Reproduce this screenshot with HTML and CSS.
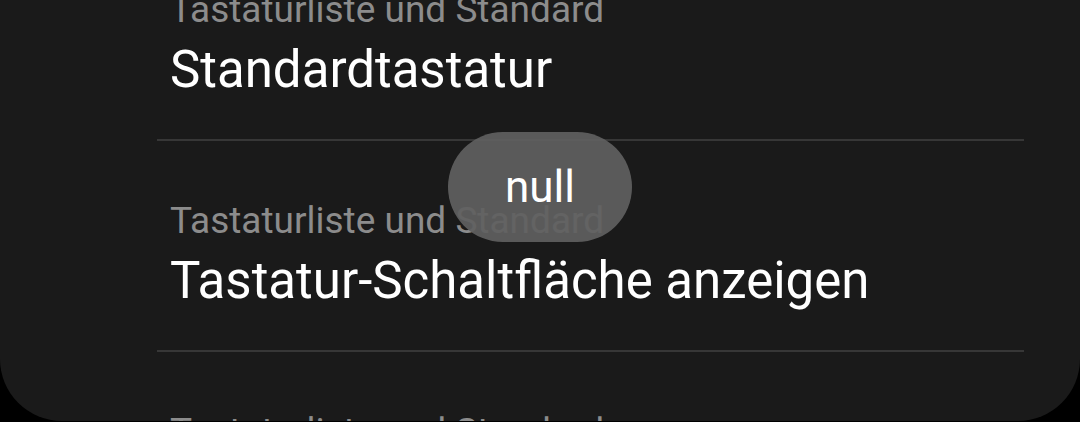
FILE: index.html
```html
<!DOCTYPE html>
<html lang="de">
<head>
  <meta charset="UTF-8">
  <meta name="viewport" content="width=device-width, initial-scale=1.0">
  <title>Tastatur</title>
  <link rel="stylesheet" href="styles.css">
</head>
<body>
  <div class="sheet">
    <ul class="settings">
      <li class="row">
        <span class="sub">Tastaturliste und Standard</span>
        <span class="title">Standardtastatur</span>
      </li>
      <li class="row">
        <span class="sub">Tastaturliste und Standard</span>
        <span class="title">Tastatur-Schaltfläche anzeigen</span>
      </li>
      <li class="row">
        <span class="sub">Tastaturliste und Standard</span>
        <span class="title">Bildschirmtastatur</span>
      </li>
    </ul>
  </div>

  <!-- Toast -->
  <div class="toast">null</div>
</body>
</html>
```

FILE: styles.css
```css
body {
  margin: 0;
  padding: 0;
  background: #000;
  font-family: Roboto, "Noto Sans", Arial, sans-serif;
  overflow: hidden;
}

.sheet {
  height: 421px;
  background: #1a1a1a;
  border-radius: 0 0 62px 62px;
  overflow: hidden;
}

.settings {
  list-style: none;
  margin: -70px 56px 0 157px;
  padding: 0;
}

.row {
  display: flex;
  flex-direction: column;
  padding: 58px 0 39px 13px;
  border-bottom: 2px solid #373737;
}

.sub {
  font-size: 37px;
  line-height: 44px;
  color: #8c8c8c;
  white-space: nowrap;
}

.title {
  margin-top: 8px;
  font-size: 51px;
  line-height: 60px;
  color: #fff;
  white-space: nowrap;
}

.toast {
  position: absolute;
  left: 448px;
  top: 132px;
  width: 184px;
  height: 110px;
  border-radius: 55px;
  background: rgba(96, 96, 96, 0.93);
  color: #fff;
  font-size: 44px;
  display: flex;
  align-items: center;
  justify-content: center;
}
```
